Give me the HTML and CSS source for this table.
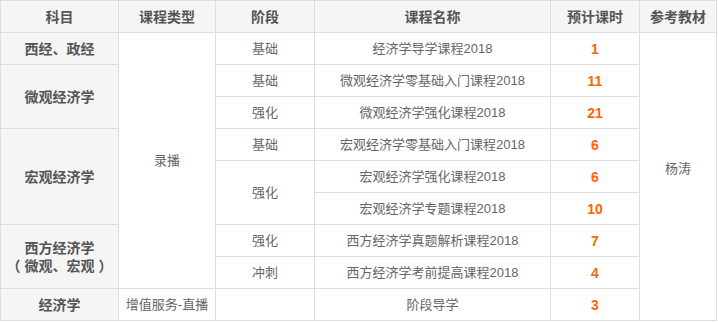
FILE: index.html
```html
<!DOCTYPE html>
<html lang="zh-CN">
<head>
<meta charset="utf-8">
<link rel="stylesheet" href="styles.css">
</head>
<body>
<table class="plan">
  <colgroup>
    <col class="c1"><col class="c2"><col class="c3"><col class="c4"><col class="c5"><col class="c6">
  </colgroup>
  <thead>
    <tr><th>科目</th><th>课程类型</th><th>阶段</th><th>课程名称</th><th>预计课时</th><th>参考教材</th></tr>
  </thead>
  <tbody>
    <tr>
      <td class="subj">西经、政经</td>
      <td rowspan="8">录播</td>
      <td>基础</td>
      <td>经济学导学课程2018</td>
      <td class="num">1</td>
      <td rowspan="9" class="book">杨涛</td>
    </tr>
    <tr>
      <td class="subj" rowspan="2">微观经济学</td>
      <td>基础</td>
      <td>微观经济学零基础入门课程2018</td>
      <td class="num">11</td>
    </tr>
    <tr>
      <td>强化</td>
      <td>微观经济学强化课程2018</td>
      <td class="num">21</td>
    </tr>
    <tr>
      <td class="subj" rowspan="3">宏观经济学</td>
      <td>基础</td>
      <td>宏观经济学零基础入门课程2018</td>
      <td class="num">6</td>
    </tr>
    <tr>
      <td rowspan="2">强化</td>
      <td>宏观经济学强化课程2018</td>
      <td class="num">6</td>
    </tr>
    <tr>
      <td>宏观经济学专题课程2018</td>
      <td class="num">10</td>
    </tr>
    <tr>
      <td class="subj two" rowspan="2">西方经济学<br><span class="paren-l">（</span>微观、宏观<span class="paren-r">）</span></td>
      <td>强化</td>
      <td>西方经济学真题解析课程2018</td>
      <td class="num">7</td>
    </tr>
    <tr>
      <td>冲刺</td>
      <td>西方经济学考前提高课程2018</td>
      <td class="num">4</td>
    </tr>
    <tr>
      <td class="subj">经济学</td>
      <td>增值服务-直播</td>
      <td></td>
      <td>阶段导学</td>
      <td class="num">3</td>
    </tr>
  </tbody>
</table>
</body>
</html>
```
FILE: styles.css
```css
html, body {
  margin: 0;
  padding: 0;
  background: #ffffff;
}

body {
  font-family: "Liberation Sans", "Noto Sans CJK SC", sans-serif;
}

.plan {
  width: 716px;
  table-layout: fixed;
  border-collapse: collapse;
  border-spacing: 0;
}

.c1 { width: 118px; }
.c2 { width: 97px; }
.c3 { width: 99px; }
.c4 { width: 236px; }
.c5 { width: 89px; }
.c6 { width: 77px; }

.plan th,
.plan td {
  border: 1px solid #dddddd;
  text-align: center;
  vertical-align: middle;
  padding: 0;
  font-size: 13px;
  line-height: 18px;
  color: #666666;
  white-space: nowrap;
}

.plan tr {
  height: 32px;
}

.plan th {
  background: #f5f5f5;
  font-size: 14px;
  font-weight: bold;
  color: #555555;
}

.plan td.subj {
  background: #f5f5f5;
  font-size: 14px;
  font-weight: bold;
  color: #555555;
}

.plan td.two {
  line-height: 18px;
}

.paren-l {
  margin-right: 4px;
}

.paren-r {
  margin-left: 4px;
}

.plan td.num {
  color: #ff6600;
  font-weight: bold;
  font-size: 14px;
}

.plan td.book {
  padding-bottom: 16px;
}
```
